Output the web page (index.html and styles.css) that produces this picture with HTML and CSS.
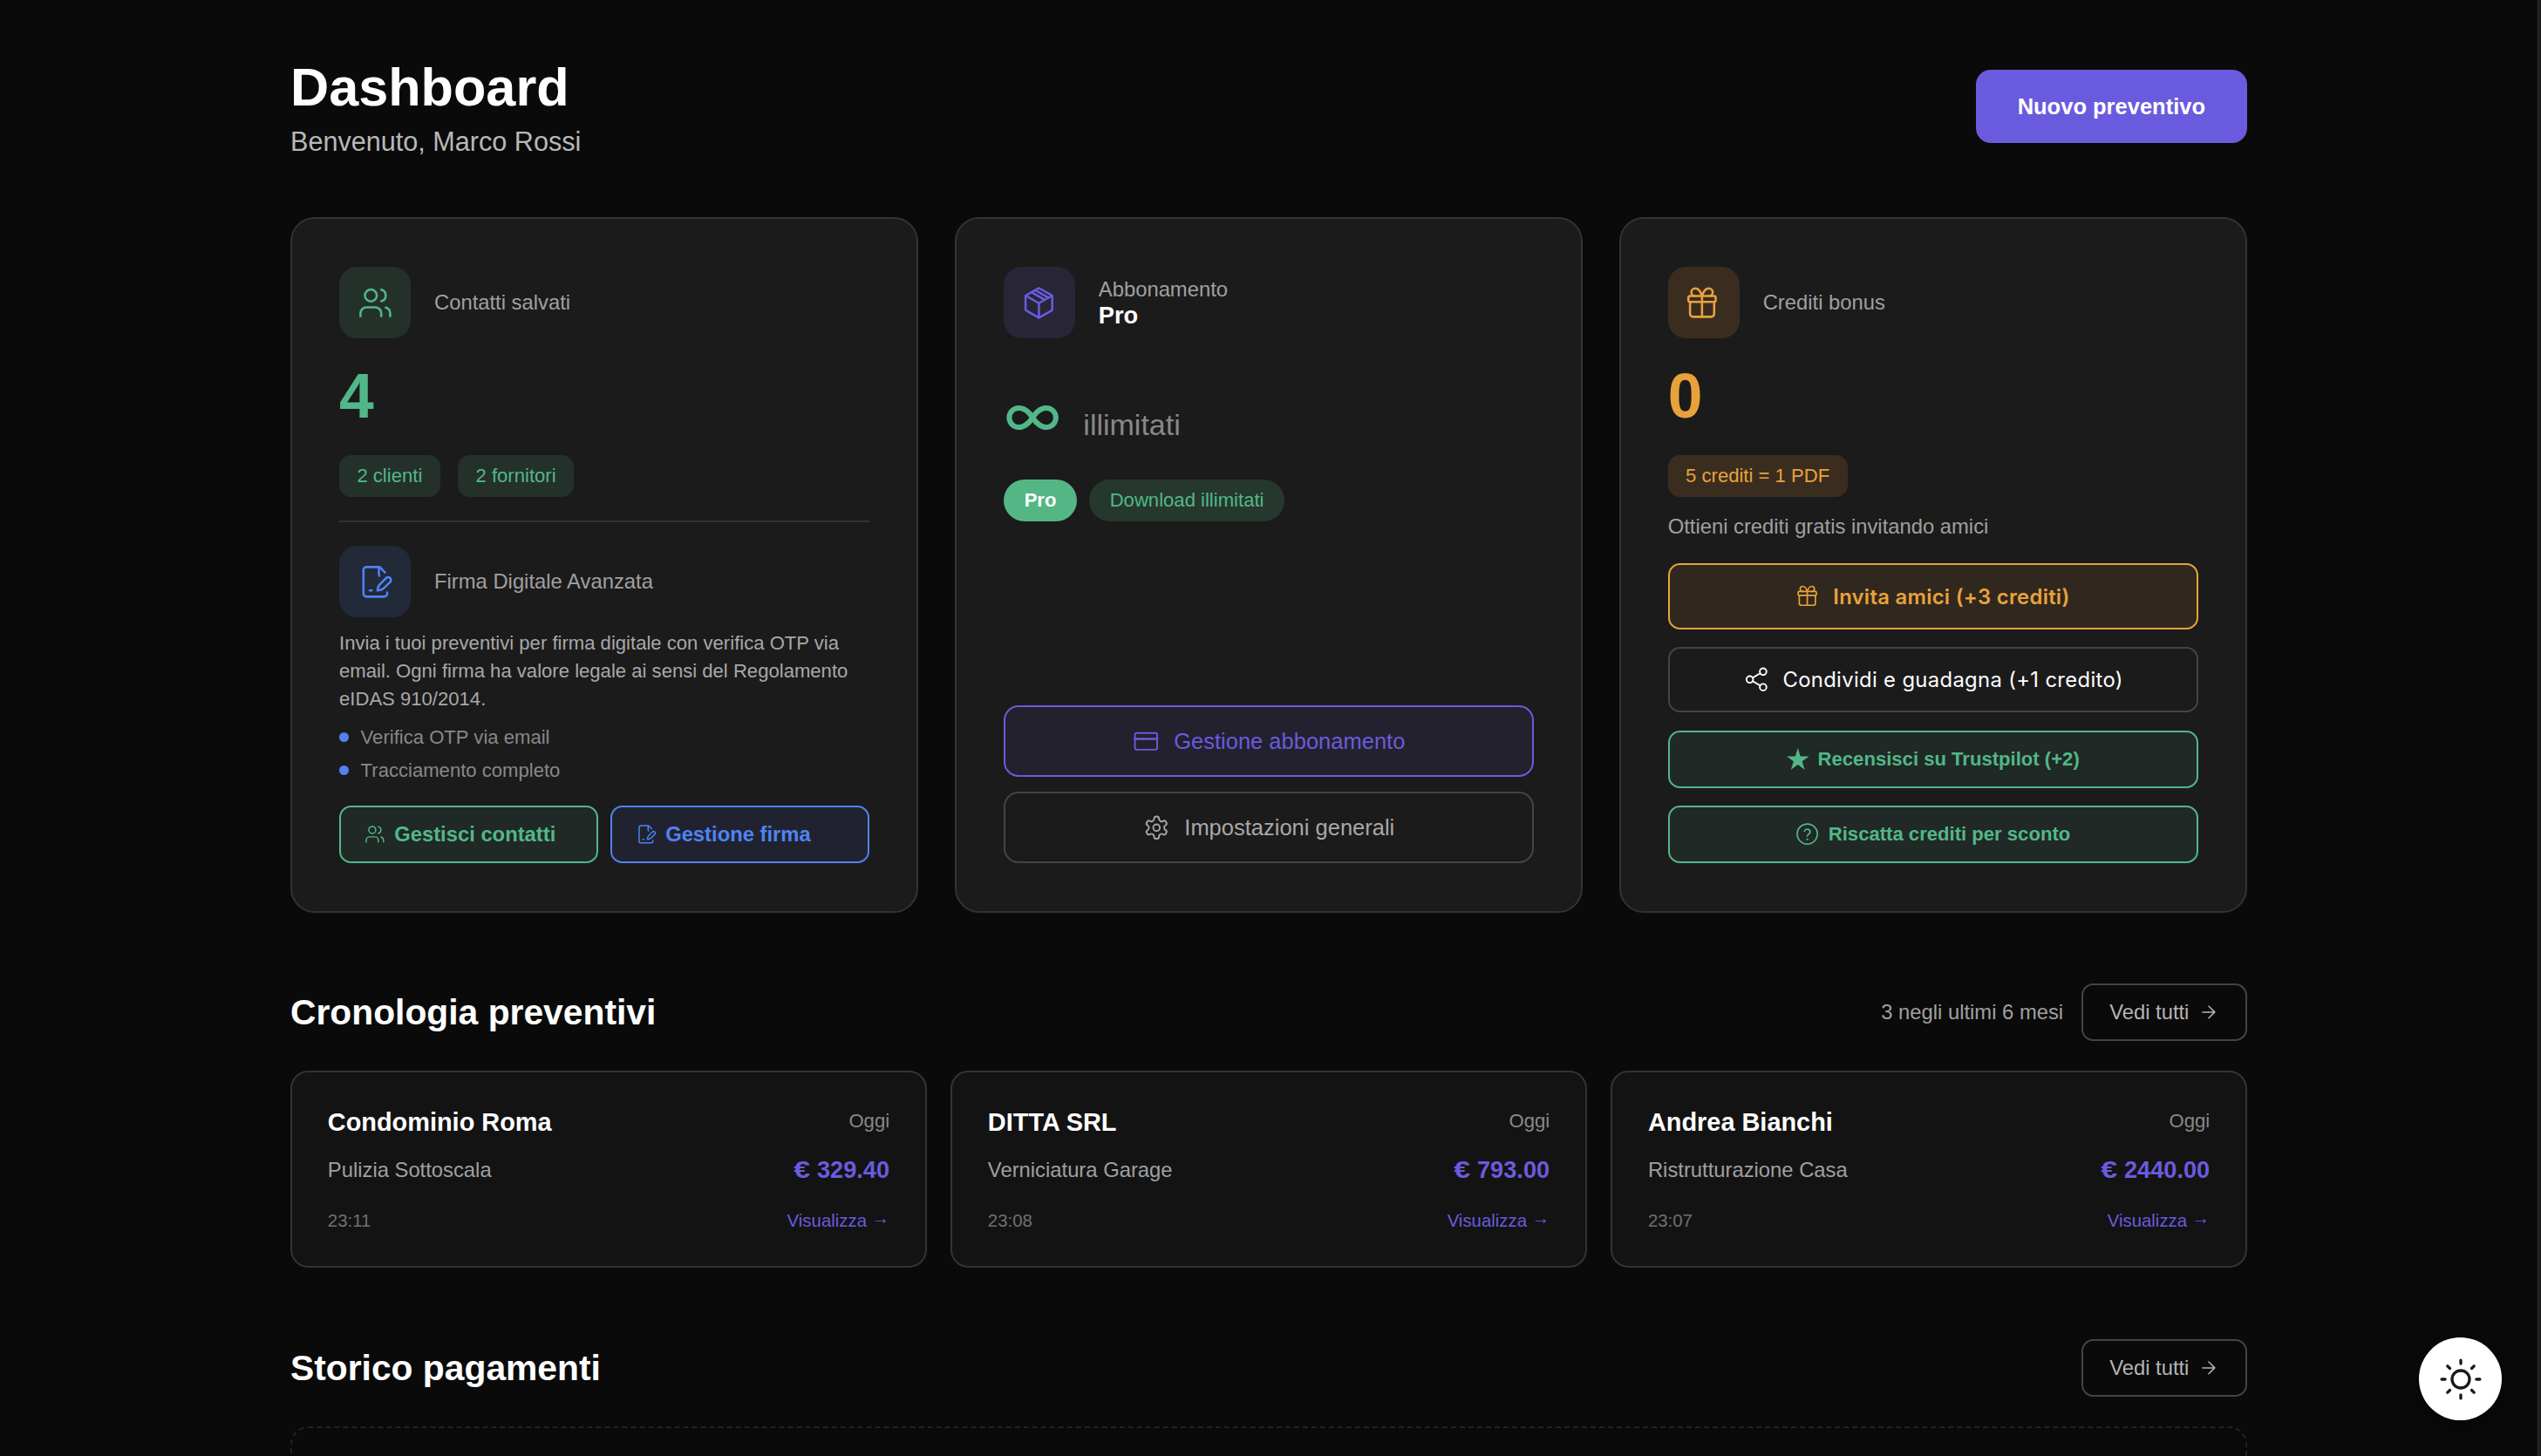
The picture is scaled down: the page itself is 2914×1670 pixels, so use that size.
FILE: index.html
```html
<!DOCTYPE html>
<html lang="it">
<head>
<meta charset="utf-8">
<title>Dashboard</title>
<link rel="stylesheet" href="styles.css">
</head>
<body>
<svg class="sprite" aria-hidden="true">
  <symbol id="users" viewBox="0 0 24 24"><path d="M16 21v-2a4 4 0 0 0-4-4H6a4 4 0 0 0-4 4v2"/><circle cx="9" cy="7" r="4"/><path d="M22 21v-2a4 4 0 0 0-3-3.87"/><path d="M16 3.13a4 4 0 0 1 0 7.75"/></symbol>
  <symbol id="sign" viewBox="0 0 24 24"><path d="M18.5 5.7 15.6 2.6A2 2 0 0 0 14.2 2H6a2 2 0 0 0-2 2v16a2 2 0 0 0 2 2h12a2 2 0 0 0 2-2v-.8"/><path d="M14.4 2.3v4.4c0 .5.1.9.4 1.3"/><path d="M8.2 17.8h1.4"/><path d="M22 12.1l-4.3 4.2c-1 .9-2.6 1.4-4.2 1.5 0-1.6.6-3.2 1.5-4.1L19.3 9.4a1.9 1.9 0 0 1 2.7 2.7z"/></symbol>
  <symbol id="box" viewBox="0 0 24 24"><path d="M12.4 2.2l8.2 4.7q.4.2.4.7v8.8q0 .5-.4.7l-8.2 4.7q-.4.2-.8 0l-8.2-4.7q-.4-.2-.4-.7V7.6q0-.5.4-.7l8.2-4.7q.4-.2.8 0z"/><path d="M3.3 7.2 12 12.2l8.7-5"/><path d="M12 22V12.2"/><path d="M7.2 4.9l8.700 5"/><path d="M9.6 3.5l8.700 5"/></symbol>
  <symbol id="gift" viewBox="0 0 24 24"><rect x="1.9" y="7.4" width="18.4" height="3.9" rx="1"/><path d="M11.1 7.4v14"/><path d="M19.3 11.3v8.1a2 2 0 0 1-2 2H5a2 2 0 0 1-2-2v-8.1"/><path d="M6.5 7.4a2.6 2.6 0 0 1 0-5.2c2 0 3.7 2.1 4.6 5.2.9-3.1 2.6-5.2 4.6-5.2a2.6 2.6 0 0 1 0 5.2"/></symbol>
  <symbol id="card" viewBox="0 0 24 24"><rect x="2" y="4.5" width="20" height="15" rx="1.8"/><path d="M2 9.8h20" stroke-width="2"/></symbol>
  <symbol id="gear" viewBox="0 0 24 24"><path d="M12.22 2h-.44a2 2 0 0 0-2 2v.18a2 2 0 0 1-1 1.73l-.43.25a2 2 0 0 1-2 0l-.15-.08a2 2 0 0 0-2.73.73l-.22.38a2 2 0 0 0 .73 2.73l.15.1a2 2 0 0 1 1 1.72v.51a2 2 0 0 1-1 1.74l-.15.09a2 2 0 0 0-.73 2.73l.22.38a2 2 0 0 0 2.73.73l.15-.08a2 2 0 0 1 2 0l.43.25a2 2 0 0 1 1 1.73V20a2 2 0 0 0 2 2h.44a2 2 0 0 0 2-2v-.18a2 2 0 0 1 1-1.73l.43-.25a2 2 0 0 1 2 0l.15.08a2 2 0 0 0 2.73-.73l.22-.39a2 2 0 0 0-.73-2.73l-.15-.08a2 2 0 0 1-1-1.74v-.5a2 2 0 0 1 1-1.74l.15-.09a2 2 0 0 0 .73-2.73l-.22-.38a2 2 0 0 0-2.73-.73l-.15.08a2 2 0 0 1-2 0l-.43-.25a2 2 0 0 1-1-1.73V4a2 2 0 0 0-2-2z"/><circle cx="12" cy="12" r="3"/></symbol>
  <symbol id="share" viewBox="0 0 24 24"><circle cx="18" cy="5" r="3"/><circle cx="6" cy="12" r="3"/><circle cx="18" cy="19" r="3"/><path d="M8.6 13.5l6.8 4M15.4 6.5l-6.8 4"/></symbol>
  <symbol id="star" viewBox="0 0 24 24"><path fill="currentColor" stroke="none" d="M12 0l2.8 9H24l-7.4 5.3L19.4 23.4 12 17.9l-7.4 5.5L7.4 14.3 0 9h9.2z"/></symbol>
  <symbol id="help" viewBox="0 0 24 24"><circle cx="12" cy="12" r="10.2"/><path d="M9.1 9a3 3 0 0 1 5.8 1c0 2-2.9 2.4-2.9 4"/><path d="M12 17.3v.1" stroke-width="2"/></symbol>
  <symbol id="arrow" viewBox="0 0 24 24"><path d="M5 12h14M12 5l7 7-7 7"/></symbol>
</svg>
<main class="page">
  <header class="top">
    <div>
      <h1 class="title">Dashboard</h1>
      <p class="subtitle">Benvenuto, Marco Rossi</p>
    </div>
    <button class="primary">Nuovo preventivo</button>
  </header>

  <section class="stats">
    <article class="card">
      <div class="head"><span class="tile green"><svg class="icon"><use href="#users"/></svg></span><span>Contatti salvati</span></div>
      <div class="number num-green">4</div>
      <div class="tags"><span class="tag green">2 clienti</span><span class="tag green">2 fornitori</span></div>
      <hr class="rule">
      <div class="head"><span class="tile blue"><svg class="icon"><use href="#sign"/></svg></span><span>Firma Digitale Avanzata</span></div>
      <p class="desc">Invia i tuoi preventivi per firma digitale con verifica OTP via email. Ogni firma ha valore legale ai sensi del Regolamento eIDAS 910/2014.</p>
      <ul class="list"><li>Verifica OTP via email</li><li>Tracciamento completo</li></ul>
      <div class="pair bottom">
        <button class="btn left b-green"><svg class="icon s24"><use href="#users"/></svg>Gestisci contatti</button>
        <button class="btn left b-blue"><svg class="icon s24"><use href="#sign"/></svg>Gestione firma</button>
      </div>
    </article>

    <article class="card">
      <div class="head"><span class="tile purple"><svg class="icon"><use href="#box"/></svg></span><div><div>Abbonamento</div><div class="plan">Pro</div></div></div>
      <div class="unlimited"><span class="infinity">∞</span><span class="word">illimitati</span></div>
      <div class="pills"><span class="pill solid">Pro</span><span class="pill soft">Download illimitati</span></div>
      <div class="stack loose bottom">
        <button class="btn wide b-purple"><svg class="icon s31"><use href="#card"/></svg>Gestione abbonamento</button>
        <button class="btn wide b-plain"><svg class="icon s31"><use href="#gear"/></svg>Impostazioni generali</button>
      </div>
    </article>

    <article class="card">
      <div class="head"><span class="tile orange"><svg class="icon"><use href="#gift"/></svg></span><span>Crediti bonus</span></div>
      <div class="number num-orange">0</div>
      <div class="tags"><span class="tag orange">5 crediti = 1 PDF</span></div>
      <p class="hint">Ottieni crediti gratis invitando amici</p>
      <div class="stack bottom">
        <button class="btn tall semi b-orange"><svg class="icon s27"><use href="#gift"/></svg>Invita amici (+3 crediti)</button>
        <button class="btn tall b-white"><svg class="icon s31"><use href="#share"/></svg>Condividi e guadagna (+1 credito)</button>
        <button class="btn small b-green"><svg class="icon s25"><use href="#star"/></svg>Recensisci su Trustpilot (+2)</button>
        <button class="btn small b-green"><svg class="icon s27"><use href="#help"/></svg>Riscatta crediti per sconto</button>
      </div>
    </article>
  </section>

  <section class="section">
    <div class="bar">
      <h2 class="heading">Cronologia preventivi</h2>
      <div class="actions"><span class="count">3 negli ultimi 6 mesi</span><button class="more">Vedi tutti<svg class="icon s24"><use href="#arrow"/></svg></button></div>
    </div>
    <div class="quotes">
      <article class="quote">
        <div class="row r1"><h3 class="client">Condominio Roma</h3><span class="date">Oggi</span></div>
        <div class="row r2"><span class="job">Pulizia Sottoscala</span><span class="price"><span class="euro">€</span> 329.40</span></div>
        <div class="row r3"><span class="time">23:11</span><a class="view">Visualizza <span class="tip">→</span></a></div>
      </article>
      <article class="quote">
        <div class="row r1"><h3 class="client">DITTA SRL</h3><span class="date">Oggi</span></div>
        <div class="row r2"><span class="job">Verniciatura Garage</span><span class="price"><span class="euro">€</span> 793.00</span></div>
        <div class="row r3"><span class="time">23:08</span><a class="view">Visualizza <span class="tip">→</span></a></div>
      </article>
      <article class="quote">
        <div class="row r1"><h3 class="client">Andrea Bianchi</h3><span class="date">Oggi</span></div>
        <div class="row r2"><span class="job">Ristrutturazione Casa</span><span class="price"><span class="euro">€</span> 2440.00</span></div>
        <div class="row r3"><span class="time">23:07</span><a class="view">Visualizza <span class="tip">→</span></a></div>
      </article>
    </div>
  </section>

  <section class="section payments">
    <div class="bar">
      <h2 class="heading">Storico pagamenti</h2>
      <div class="actions"><button class="more">Vedi tutti<svg class="icon s24"><use href="#arrow"/></svg></button></div>
    </div>
    <div class="empty"></div>
  </section>
</main>
<button class="theme" aria-label="Tema">
  <svg class="sun" viewBox="-24 -24 48 48"><circle r="10"/><path d="M0-21.9v4M0 17.9v4M-21.9 0h4M17.9 0h4M-15.2-15.2l2.7 2.7M12.5 12.5l2.7 2.7M-15.2 15.2l2.7-2.7M12.5-12.5l2.7-2.7"/></svg>
</button>
<div class="track"></div>
</body>
</html>
```
FILE: styles.css
```css
* { box-sizing: border-box; margin: 0; padding: 0; }
html, body { height: 1670px; overflow: hidden; }
body {
  background: #0a0a0a;
  color: #fff;
  font-family: "Liberation Sans", Arial, Helvetica, sans-serif;
  font-size: 23.8px;
}
button { font: inherit; color: inherit; background: none; border: 0; }
ul { list-style: none; }
.sprite { position: absolute; width: 0; height: 0; }
.icon {
  width: 40.8px; height: 40.8px; flex: none;
  fill: none; stroke: currentColor; stroke-width: 1.5;
  stroke-linecap: round; stroke-linejoin: round;
}
.s24 { width: 23.8px; height: 23.8px; }
.s25 { width: 25.5px; height: 25.5px; }
.s27 { width: 27.2px; height: 27.2px; }
.s31 { width: 30.6px; height: 30.6px; }

.page {
  display: flex; flex-direction: column;
  width: 2244px; height: 1670px; margin-left: 333px; padding-top: 65px;
}

.top { display: flex; justify-content: space-between; flex: none; height: 184px; }
.title { font-size: 61.2px; line-height: 70px; }
.subtitle { margin-top: 10px; font-size: 30.6px; line-height: 35px; color: #b8b8b8; }
.primary {
  height: 84px; margin-top: 15px; padding: 0 48px;
  border-radius: 17px; background: #6a5bde;
  font-size: 25.5px; font-weight: 700;
}

.stats { display: grid; grid-template-columns: repeat(3, 1fr); gap: 41.5px; flex: none; height: 798px; }
.card {
  display: flex; flex-direction: column;
  padding: 55px 54px 55px;
  border: 2px solid #333; border-radius: 28px; background: #1b1b1b;
}
.head { display: flex; align-items: center; gap: 27px; color: #a0a0a0; }
.tile { display: flex; align-items: center; justify-content: center; width: 82px; height: 82px; border-radius: 20.4px; }
.plan { font-size: 27.2px; font-weight: 700; line-height: 31px; color: #fff; }
.green { background: #24312b; color: #52b788; }
.blue { background: #222939; color: #4f83f1; }
.purple { background: #272536; color: #6a5bde; }
.orange { background: #3a2d20; color: #e9a23b; }

.number { margin-top: 26px; font-size: 71.4px; font-weight: 700; line-height: 81px; }
.num-green { color: #52b788; }
.num-orange { color: #e9a23b; }
.tags { display: flex; gap: 20.4px; margin-top: 27px; }
.tag { height: 48px; padding: 0 20.4px; border-radius: 13.6px; font-size: 22.1px; line-height: 48px; }
.rule { height: 2px; margin: 27px 0; border: 0; background: #333; }
.desc { margin-top: 13.6px; font-size: 22.1px; line-height: 32px; color: #a8a8a8; }
.list { display: flex; flex-direction: column; gap: 13px; margin-top: 15px; font-size: 22.1px; line-height: 25.4px; color: #888; }
.list li { display: flex; align-items: center; gap: 13.6px; }
.list li::before { content: ""; width: 11px; height: 11px; border-radius: 50%; background: #4f83f1; }

.bottom { margin-top: auto; }
.pair { display: grid; grid-template-columns: 1fr 1fr; gap: 13.6px; }
.stack { display: flex; flex-direction: column; gap: 20.4px; }
.loose { gap: 17px; }
.btn {
  display: flex; align-items: center; justify-content: center;
  border: 2px solid currentColor; border-radius: 13.6px; white-space: nowrap;
}
.left { height: 66px; padding: 0 27.2px; gap: 10.2px; justify-content: flex-start; font-weight: 700; }
.wide { height: 82px; gap: 17px; border-radius: 17px; font-size: 25.5px; }
.tall { height: 75.2px; gap: 15px; font-family: Inter, "Liberation Sans", sans-serif; font-weight: 400; letter-spacing: .35px; }
.semi { font-weight: 600; letter-spacing: .3px; }
.small { height: 66px; gap: 10.2px; font-size: 22.1px; font-weight: 700; }
.b-green { background: #202925; color: #52b788; }
.b-blue { background: #20232f; color: #4f83f1; }
.b-purple { background: #23212d; color: #6a5bde; }
.b-orange { background: #30281e; color: #e9a23b; }
.b-plain { border-color: #444; color: #a8a8a8; }
.b-white { border-color: #444; }

.unlimited { display: flex; align-items: flex-start; height: 82px; margin-top: 53px; }
.infinity { width: 91.5px; font-family: Inter, "Liberation Sans", sans-serif; font-size: 71.4px; font-weight: 400; line-height: 69px; color: #52b788; }
.word { margin-top: 27px; font-size: 34px; line-height: 39px; color: #888; }
.pills { display: flex; gap: 13.6px; margin-top: 27px; }
.pill { height: 48px; padding: 0 23.8px; border-radius: 24px; font-size: 22.1px; line-height: 48px; }
.solid { background: #55b685; font-weight: 700; }
.soft { background: #26372e; color: #52b788; }
.hint { margin-top: 20px; line-height: 27px; color: #a0a0a0; }

.section { margin-top: 81px; }
.bar { display: flex; justify-content: space-between; align-items: center; height: 66px; margin-bottom: 34px; }
.heading { font-size: 40.8px; line-height: 47px; }
.actions { display: flex; align-items: center; gap: 20.4px; }
.count { color: #a0a0a0; }
.more {
  display: flex; align-items: center; gap: 10.2px;
  height: 66px; padding: 0 30.6px;
  border: 2px solid #444; border-radius: 13.6px; color: #b4b4b4;
}
.quotes { display: grid; grid-template-columns: repeat(3, 1fr); gap: 27.2px; }
.quote { height: 226px; padding: 41px 40.8px; border: 2px solid #333; border-radius: 20.4px; background: #131313; }
.row { display: flex; justify-content: space-between; }
.r1 { height: 33px; }
.r2 { height: 31px; margin-top: 22px; align-items: center; }
.r3 { height: 23px; margin-top: 32px; font-size: 20.4px; line-height: 23px; }
.client { font-size: 28.9px; line-height: 33px; }
.date { font-size: 22.1px; line-height: 29px; color: #888; }
.job { color: #a0a0a0; }
.price { font-size: 27.2px; font-weight: 700; line-height: 31px; color: #6a5bde; }
.euro { display: inline-block; transform: scaleX(1.25); transform-origin: right; line-height: 31px; }
.time { color: #707070; }
.view { color: #6a5bde; }
.tip { display: inline-block; line-height: 1; transform: translateY(-3px); }
.payments { display: flex; flex-direction: column; flex: 1; margin-top: 82px; }
.payments .bar { flex: none; }
.empty { flex: 1; border: 2px dashed #222; border-bottom: 0; border-radius: 20.4px 20.4px 0 0; }

.theme {
  position: fixed; right: 45px; bottom: 41px;
  display: flex; align-items: center; justify-content: center;
  width: 95px; height: 95px; border-radius: 50%;
  background: #fff; box-shadow: 0 7px 20px rgba(0, 0, 0, .4);
}
.sun { width: 48px; height: 48px; fill: none; stroke: #1a1a1a; stroke-width: 3.3; stroke-linecap: round; }
.track { position: fixed; top: 0; right: 0; width: 4px; height: 100%; background: #1c1c1c; border-left: 1px solid #2c2c2c; }
```
